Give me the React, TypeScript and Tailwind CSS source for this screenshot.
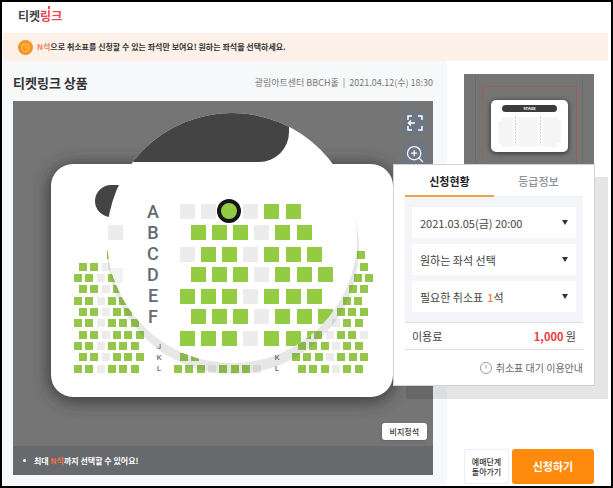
import { useState } from "react";
import { ZoomIn } from "lucide-react";

type Seat = { x: number; y: number; free: boolean };

// Enlarged seats inside the lens. "0" is a taken seat, "1" is a free one.
const LENS_ROWS = [
  { name: "A", x: 167, y: 103, seats: "000011" },
  { name: "B", x: 178, y: 124, seats: "111011" },
  { name: "C", x: 167, y: 146, seats: "0110111" },
  { name: "D", x: 178, y: 166, seats: "1110111" },
  { name: "E", x: 167, y: 188, seats: "1110111" },
  { name: "F", x: 178, y: 208, seats: "1110111" },
  { name: "", x: 167, y: 230, seats: "1110111" },
];

// Small seats of the whole hall, one entry for each block of a row.
const HALL_ROWS = [
  { y: 150, blocks: [[94, "1"], [344, "1"]] },
  { y: 162, blocks: [[66, "110"], [347, "1"]] },
  { y: 173, blocks: [[61, "1101"], [341, "11"]] },
  { y: 184, blocks: [[66, "1101"], [336, "11"]] },
  { y: 196, blocks: [[61, "11011"], [330, "11"]] },
  { y: 207, blocks: [[66, "11011"], [324, "111"]] },
  { y: 218, blocks: [[61, "110111"], [319, "011"]] },
  { y: 230, blocks: [[66, "110111"], [290, "110110"]] },
  { y: 241, blocks: [[61, "110111"], [285, "111011"]] },
  { y: 252, blocks: [[66, "110111"], [167, "11"], [279, "1110111"]] },
  { y: 264, blocks: [[61, "110111"], [161, "11101110"], [285, "111011"]] },
] as { y: number; blocks: [number, string][] }[];

const toSeats = (x: number, y: number, seats: string, pitch: number): Seat[] =>
  seats.split("").map((s, i) => ({ x: Math.round(x + i * pitch), y, free: s === "1" }));

const lensSeats = LENS_ROWS.flatMap((r) => toSeats(r.x, r.y, r.seats, 21.1));
const hallSeats = HALL_ROWS.flatMap((r) =>
  r.blocks.flatMap(([x, seats]) => toSeats(x, r.y, seats, 11.3))
);

const SeatMap = () => {
  return (
    <svg viewBox="0 0 420 345" className="block w-full font-['Roboto',sans-serif]" role="img" aria-label="좌석 배치도">
      <defs>
        <clipPath id="lens">
          <circle cx="219" cy="137" r="125" />
        </clipPath>
        <clipPath id="hall">
          <rect x="38" y="63" width="342" height="233" rx="22" />
        </clipPath>
        <filter id="soft" x="-20%" y="-20%" width="140%" height="140%">
          <feGaussianBlur stdDeviation="8" />
        </filter>
      </defs>
      <rect width="420" height="345" fill="#757575" />
      <rect x="35" y="63" width="348" height="238" rx="26" fill="#303030" opacity="0.8" filter="url(#soft)" />
      <rect x="38" y="63" width="342" height="233" rx="22" fill="#fff" />

      {/* Hall */}
      <rect x="82" y="84" width="200" height="32" rx="16" fill="#444" />
      {hallSeats.map((s) => (
        <rect key={`${s.x}-${s.y}`} x={s.x} y={s.y} width="8" height="8" fill={s.free ? "#93c64a" : "#ececec"} />
      ))}
      <g fill="#777" fontSize="8" fontWeight="500" textAnchor="middle">
        <text x="146" y="248">J</text>
        <text x="146" y="259">K</text>
        <text x="146" y="270">L</text>
        <text x="264" y="259">K</text>
        <text x="264" y="270">L</text>
      </g>

      {/* Lens with its cast shade */}
      <circle cx="220" cy="147" r="126" fill="#555" opacity="0.14" clipPath="url(#hall)" />
      <circle cx="219" cy="137" r="125" fill="#fff" />
      <g clipPath="url(#lens)">
        <rect x="40" y="-20" width="236" height="81" rx="30" fill="#444" />
        <rect x="95" y="124" width="15" height="15" fill="#ececec" />
        <rect x="95" y="167" width="15" height="15" fill="#f2f2f2" />
        {lensSeats.map((s) => (
          <rect key={`${s.x}-${s.y}`} x={s.x} y={s.y} width="15" height="15" fill={s.free ? "#93cb43" : "#ececec"} />
        ))}
      </g>
      <g fill="#646b73" fontSize="18" fontWeight="500" textAnchor="middle">
        {LENS_ROWS.slice(0, 6).map((r, i) => (
          <text key={r.name} x="140" y={117 + i * 21}>{r.name}</text>
        ))}
      </g>
      <circle cx="216" cy="110" r="10" fill="#93cb43" stroke="#151515" strokeWidth="4" />
    </svg>
  );
};

const MiniMap = () => {
  return (
    <svg viewBox="0 0 130 100" className="block w-full" role="img" aria-label="전체 보기">
      <defs>
        <filter id="glow" x="-20%" y="-20%" width="140%" height="140%">
          <feGaussianBlur stdDeviation="2" />
        </filter>
      </defs>
      <rect width="130" height="100" fill="#757575" />
      <path d="M11.500 0V100M118.500 0V100" stroke="#6b6b6b" />
      <path d="M18.500 100V12.500H112.500V100" fill="none" stroke="#a05c5c" />
      <rect x="26" y="26" width="79" height="54" rx="6" fill="#333" opacity="0.8" filter="url(#glow)" />
      <rect x="27" y="26" width="77" height="52" rx="5" fill="#fff" />
      <rect x="38" y="31" width="55" height="7" rx="3.500" fill="#3c3c3c" />
      <text x="65.500" y="36" fontSize="4" fontWeight="700" fill="#fff" textAnchor="middle">STAGE</text>
      <path d="M34 47H37V43H49V73H38V70H34ZM54 43H74V73H54ZM79 43H94V46H97V69H93V73H79Z" fill="#f5f5f5" />
      <path d="M51.500 43V71M76.500 43V71" stroke="#ccc" strokeDasharray="2 1" />
    </svg>
  );
};

const Caret = () => (
  <svg viewBox="0 0 6 5" className="pointer-events-none h-[5px] w-[6px] shrink-0" aria-hidden="true">
    <path d="M0 0H6L3 5Z" fill="#333" />
  </svg>
);

const ApplyPanel = () => {
  const [tab, setTab] = useState("status");

  return (
    <section className="absolute right-[13px] top-[103px] w-[202px] border border-[#d2d2d2] bg-white px-[11px] text-[11px] leading-4 text-[#444] shadow-[13px_13px_0_rgba(0,0,0,0.1)]">
      <div className="flex h-8 border-b border-[#eef0f3]" role="tablist">
        <button
          type="button"
          role="tab"
          aria-selected={tab === "status"}
          onClick={() => setTab("status")}
          className="-mb-px flex-1 border-b-2 border-[#eda549] pt-0.5 font-bold text-[#222]"
        >
          신청현황
        </button>
        <button
          type="button"
          role="tab"
          aria-selected={tab === "grade"}
          onClick={() => setTab("grade")}
          className="flex-1 font-medium text-[#8d9299]"
        >
          등급정보
        </button>
      </div>
      <div className="flex flex-col gap-1.5 bg-[#f3f5f8] px-[7px] py-2.5">
        <label className="flex h-[31px] items-center bg-white px-2">
          <select aria-label="관람일시" className="min-w-0 flex-1 appearance-none bg-transparent outline-none">
            <option>2021.03.05(금) 20:00</option>
          </select>
          <Caret />
        </label>
        <label className="flex h-[31px] items-center bg-white px-2">
          <select aria-label="좌석" className="min-w-0 flex-1 appearance-none bg-transparent outline-none">
            <option>원하는 좌석 선택</option>
          </select>
          <Caret />
        </label>
        <label className="flex h-[31px] items-center bg-white px-2">
          <span>필요한 취소표</span>
          <select className="ml-1 field-sizing-content appearance-none bg-transparent font-medium text-[#f0803c] outline-none">
            <option>1</option>
          </select>
          <span className="flex-1">석</span>
          <Caret />
        </label>
      </div>
      <div className="flex h-7 items-center justify-between border-y border-[#dcdee1] px-[7px]">
        <span>이용료</span>
        <span>
          <strong className="font-bold text-[#ee3b40]">1,000</strong> 원
        </span>
      </div>
      <a href="#guide" className="flex h-[35px] items-center justify-end gap-1 text-[10px] text-[#666]">
        <svg viewBox="0 0 12 12" className="size-3" fill="none" stroke="#999" aria-hidden="true">
          <circle cx="6" cy="6" r="5.500" />
          <path d="M6 3V6.500" />
        </svg>
        취소표 대기 이용안내
      </a>
    </section>
  );
};

const App = () => {
  return (
    <div className="flex min-h-screen flex-col border-2 border-black bg-white pb-px pl-px pr-[3px] font-['Noto_Sans_CJK_KR','Noto_Sans',sans-serif] text-[#333]">
      <header className="flex h-[31px] items-center px-[15px] pb-1">
        <a href="#home" className="relative text-[12px] font-bold leading-4 text-[#444]">
          티켓<span className="text-[#ef4450]">링크</span>
          <span className="absolute -top-0.5 left-[30px] h-[3px] w-0.5 bg-[#ef4450]" />
        </a>
      </header>

      <div className="flex h-7 items-center gap-1 bg-[#fdf1ea] px-[15px] text-[8px] font-bold">
        <svg viewBox="0 0 15 15" className="size-[15px]" fill="none" aria-hidden="true">
          <circle cx="7.500" cy="7.500" r="7.500" fill="#f7941e" />
          <circle cx="7.500" cy="7.800" r="3.800" stroke="#ffc778" />
          <path d="M7.500 5.500V8H9.500M4 4.500L5 3.500M11 4.500L10 3.500" stroke="#ffc778" />
        </svg>
        <p>
          <span className="text-[#f58450]">N석</span>으로 취소표를 신청할 수 있는 좌석만 보여요! 원하는 좌석을 선택하세요.
        </p>
      </div>

      <main className="relative flex flex-1">
        <div className="flex-1 bg-[#f7f8fa] pb-2 pl-2.5 pr-3.5">
          <div className="flex h-10 items-center justify-between pt-1">
            <h1 className="text-[13px] font-bold leading-5">티켓링크 상품</h1>
            <p className="flex gap-1 text-[9px] leading-4 text-[#777]">
              <span>광림아트센터 BBCH홀</span>
              <span>|</span>
              <span>2021.04.12(수) 18:30</span>
            </p>
          </div>
          <div className="relative">
            <SeatMap />
            <div className="absolute right-1.5 top-2.5 flex flex-col gap-[7px]">
              <button type="button" aria-label="전체 화면" className="flex size-6 items-center justify-center bg-[#6c7682] text-white">
                <svg viewBox="0 0 16 16" className="size-4" fill="none" stroke="currentColor" strokeWidth="1.500" aria-hidden="true">
                  <path d="M1 5V1H5M11 1H15V5M15 11V15H11M5 15H1V11M1 8H8M4 5.500L1.500 8L4 10.500" />
                </svg>
              </button>
              <button type="button" aria-label="확대" className="flex size-6 items-center justify-center bg-[#6c7682] text-white">
                <ZoomIn className="size-5" strokeWidth={1.5} />
              </button>
            </div>
            <button
              type="button"
              className="absolute bottom-1.5 right-1.5 h-[17px] rounded-[3px] bg-white px-2 text-[8px] font-medium leading-4 shadow"
            >
              비지정석
            </button>
          </div>
          <p className="flex h-[29px] items-center gap-2 bg-[#67696c] px-2.5 text-[8px] font-bold text-white">
            <span className="size-[3px] rounded-full bg-white" />
            <span>
              최대 <span className="text-[#ef7444]">N석</span>까지 선택할 수 있어요!
            </span>
          </p>
        </div>

        <aside className="flex w-[161px] shrink-0 flex-col justify-between pb-px pl-[17px] pr-3.5 pt-[13px]">
          <MiniMap />
          <div className="flex gap-[3px]">
            <button type="button" className="h-[35px] w-[45px] rounded-[3px] border border-[#eee] bg-white text-[8px] font-medium leading-[10px]">
              예매단계
              <br />
              돌아가기
            </button>
            <button type="button" className="h-[35px] flex-1 rounded-[3px] bg-[#ff8a0c] text-[11px] font-bold text-white">
              신청하기
            </button>
          </div>
        </aside>
        <ApplyPanel />
      </main>
    </div>
  );
};

export default App;
